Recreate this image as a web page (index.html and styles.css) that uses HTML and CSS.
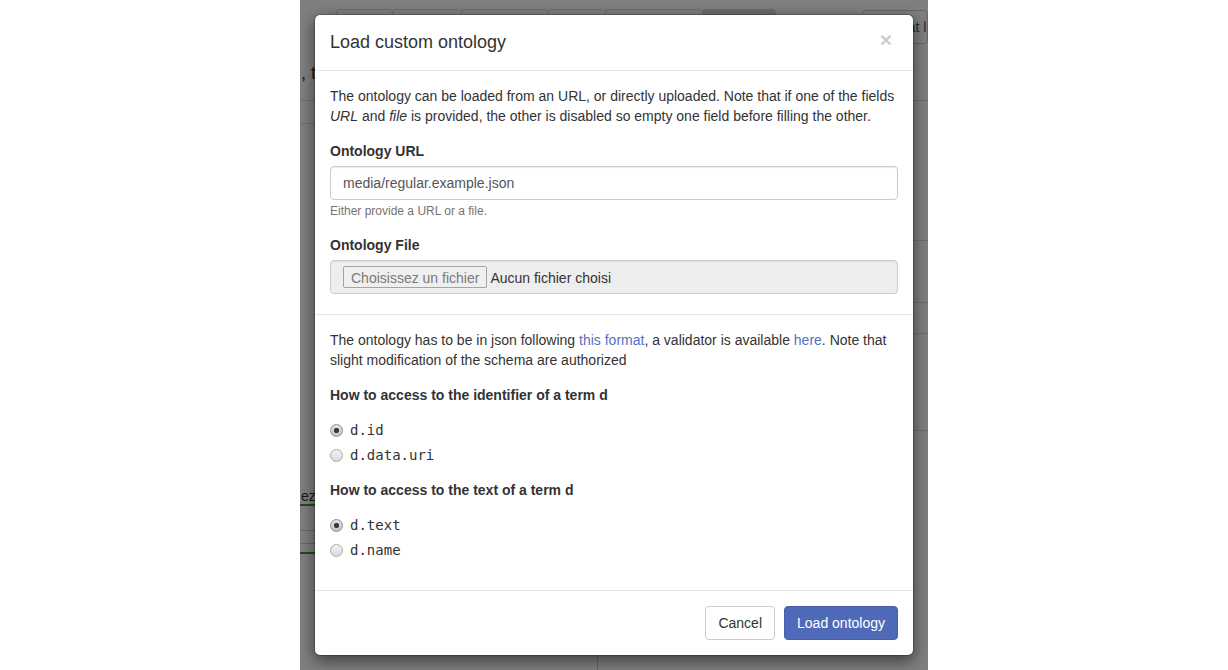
FILE: index.html
```html
<!DOCTYPE html>
<html lang="en">
<head>
<meta charset="utf-8">
<title>Load custom ontology</title>
<link rel="stylesheet" href="styles.css">
</head>
<body>
<div class="stage">
  <div class="page">
    <div class="topbar">
      <div class="tabs">
        <span class="tab w56"></span>
        <span class="tab w69"></span>
        <span class="tab w86"></span>
        <span class="tab w58"></span>
        <span class="tab w97"></span>
        <span class="tab w74 active"></span>
      </div>
      <span class="topbtn">Format l</span>
    </div>
    <div class="intro">, the terms</div>
    <div class="cols">
      <div class="col-left">
        <div class="lrule"></div>
        <div class="spacer-l"></div>
        <div class="green-text">ezi</div>
        <div class="gline"></div>
        <div class="grayline"></div>
        <div class="grayline second"></div>
        <div class="gline second"></div>
      </div>
      <div class="col-right">
        <div class="rrule r1"></div>
        <div class="rrule r2"></div>
        <div class="rrule r3"></div>
        <div class="rrule r4"></div>
      </div>
    </div>
  </div>
  <div class="backdrop"></div>
  <div class="modal-wrap">
    <div class="modal">
      <div class="modal-header">
        <h4 class="modal-title">Load custom ontology</h4>
        <span class="close">×</span>
      </div>
      <div class="modal-body first">
        <p class="intro-text">The ontology can be loaded from an URL, or directly uploaded. Note that if one of the fields <em>URL</em> and <em>file</em> is provided, the other is disabled so empty one field before filling the other.</p>
        <label class="field-label">Ontology URL</label>
        <div class="form-control">media/regular.example.json</div>
        <div class="help-block">Either provide a URL or a file.</div>
        <label class="field-label">Ontology File</label>
        <div class="file-control">
          <span class="file-btn">Choisissez un fichier</span>
          <span class="file-name">Aucun fichier choisi</span>
        </div>
      </div>
      <div class="modal-body second">
        <p class="intro-text">The ontology has to be in json following <a class="link">this format</a>, a validator is available <a class="link">here</a>. Note that slight modification of the schema are authorized</p>
        <div class="group">
          <label class="field-label">How to access to the identifier of a term d</label>
          <div class="radios">
            <div class="radio"><span class="dot checked"></span><code>d.id</code></div>
            <div class="radio"><span class="dot"></span><code>d.data.uri</code></div>
          </div>
        </div>
        <div class="group">
          <label class="field-label">How to access to the text of a term d</label>
          <div class="radios">
            <div class="radio"><span class="dot checked"></span><code>d.text</code></div>
            <div class="radio"><span class="dot"></span><code>d.name</code></div>
          </div>
        </div>
      </div>
      <div class="modal-footer">
        <button class="btn btn-default">Cancel</button>
        <button class="btn btn-primary">Load ontology</button>
      </div>
    </div>
  </div>
</div>
</body>
</html>
```

FILE: styles.css
```css
* { box-sizing: border-box; }
html, body { margin: 0; padding: 0; background: #fff; }
body {
  font-family: "Liberation Sans", Arial, sans-serif;
  font-size: 14px;
  line-height: 20px;
  color: #333;
}
.stage {
  position: relative;
  width: 628px;
  height: 670px;
  margin: 0 auto;
  overflow: hidden;
  background: #fff;
}

/* background page */
.page { height: 670px; background: #fff; }
.topbar {
  display: flex;
  align-items: flex-start;
  padding-top: 9px;
  height: 50px;
}
.tabs { display: flex; margin-left: 36px; }
.tab {
  height: 40px;
  border: 1px solid #d6d6d6;
  border-right: 0;
  border-radius: 4px 4px 0 0;
  background: #fff;
}
.tab.active { background: #d8d8d8; border-right: 1px solid #d6d6d6; }
.w56 { width: 56px; } .w69 { width: 69px; } .w86 { width: 86px; }
.w58 { width: 58px; } .w97 { width: 97px; } .w74 { width: 74px; }
.topbtn {
  margin-left: 86px;
  margin-top: 1px;
  width: 80px;
  height: 34px;
  border: 1px solid #ccc;
  border-radius: 4px;
  padding: 6px 0 0 12px;
  color: #555;
  white-space: nowrap;
  font-size: 14px;
}
.intro {
  margin-top: 11px;
  font-size: 18px;
  line-height: 24px;
  color: #333;
  padding-left: 1px;
  height: 40px;
  border-bottom: 1px solid #ddd;
}
.cols { display: grid; grid-template-columns: 298px 1fr; height: 570px; }
.col-left { border-right: 1px solid #ccc; }
.lrule { margin-top: 22px; border-top: 1px solid #ddd; }
.spacer-l { height: 364px; }
.green-text { font-size: 14px; line-height: 16px; color: #333; padding-left: 1px; }
.gline { border-top: 2px solid #3a9a3a; }
.gline.second { margin-top: 8px; }
.grayline { margin-top: 24px; border-top: 1px solid #ccc; }
.grayline.second { margin-top: 12px; }
.rrule { border-top: 1px solid #ddd; }
.r1 { margin-top: 139px; }
.r2 { margin-top: 61px; }
.r3 { margin-top: 30px; }
.r4 { margin-top: 96px; }

.backdrop {
  position: absolute;
  inset: 0;
  background: rgba(0, 0, 0, 0.5);
}

/* modal */
.modal-wrap {
  position: absolute;
  inset: 0;
  padding-top: 14px;
}
.modal {
  width: 600px;
  margin: 0 auto;
  background: #fff;
  border: 1px solid rgba(0, 0, 0, 0.2);
  border-radius: 6px;
  background-clip: padding-box;
  box-shadow: 0 5px 15px rgba(0, 0, 0, 0.5);
}
.modal-header {
  display: flex;
  justify-content: space-between;
  align-items: flex-start;
  padding: 15px;
  border-bottom: 1px solid #e5e5e5;
  height: 56px;
}
.modal-title {
  margin: 0;
  font-size: 18px;
  line-height: 25px;
  font-weight: 500;
  color: #333;
}
.close {
  font-size: 21px;
  font-weight: bold;
  line-height: 1;
  color: #000;
  opacity: 0.2;
  margin-top: -1px;
  margin-right: 6px;
}
.modal-body { padding: 15px; display: flex; flex-direction: column; }
.modal-body.first { border-bottom: 1px solid #e5e5e5; padding-bottom: 20px; }
.modal-body.second { padding-bottom: 30px; }
.intro-text { margin: 0 0 15px; }
.intro-text em { font-style: italic; }
.field-label { display: block; font-weight: bold; margin-bottom: 5px; }
.form-control {
  height: 34px;
  padding: 6px 12px;
  border: 1px solid #ccc;
  border-radius: 4px;
  color: #555;
  box-shadow: inset 0 1px 1px rgba(0, 0, 0, 0.075);
}
.help-block {
  margin-top: 3px;
  margin-bottom: 15px;
  font-size: 12px;
  line-height: 17px;
  color: #737373;
}
.file-control {
  display: flex;
  align-items: center;
  gap: 3px;
  height: 34px;
  padding: 0 12px;
  border: 1px solid #ccc;
  border-radius: 4px;
  background: #eee;
  box-shadow: inset 0 1px 1px rgba(0, 0, 0, 0.075);
}
.file-btn {
  height: 22px;
  padding: 1px 7px 0;
  line-height: 20px;
  border: 1px solid #a3a3a3;
  border-radius: 2px;
  background: #efefef;
  color: #7a7a7a;
  white-space: nowrap;
}
.file-name { color: #333; white-space: nowrap; line-height: 20px; padding-top: 2px; }
.link { color: #5670c4; text-decoration: none; }
.group { display: flex; flex-direction: column; margin-bottom: 15px; }
.group:last-child { margin-bottom: 0; }
.radios { display: flex; flex-direction: column; gap: 5px; margin-top: 10px; }
.radio { display: flex; align-items: center; height: 20px; gap: 7px; }
.dot {
  width: 13px;
  height: 13px;
  border-radius: 50%;
  border: 1px solid #a9a9a9;
  background: linear-gradient(#f3f3f3, #dadada);
  flex: none;
}
.dot.checked {
  border-color: #8f8f8f;
  background:
    radial-gradient(circle at 50% 50%, #3a3a3a 0, #3a3a3a 2.2px, rgba(0,0,0,0) 3px),
    linear-gradient(#e2e2e2, #c3c3c3);
}
code {
  font-family: "DejaVu Sans Mono", monospace;
  font-size: 14px;
  color: #333;
  line-height: 20px;
}
.modal-footer {
  display: flex;
  justify-content: flex-end;
  gap: 9px;
  padding: 15px;
  border-top: 1px solid #e5e5e5;
}
.btn {
  height: 34px;
  padding: 6px 12px;
  font-family: "Liberation Sans", Arial, sans-serif;
  font-size: 14px;
  line-height: 20px;
  border-radius: 4px;
  border: 1px solid #ccc;
  background: #fff;
  color: #333;
}
.btn-primary {
  background: #4f6ab9;
  border-color: #4660ad;
  color: #fff;
}
```
